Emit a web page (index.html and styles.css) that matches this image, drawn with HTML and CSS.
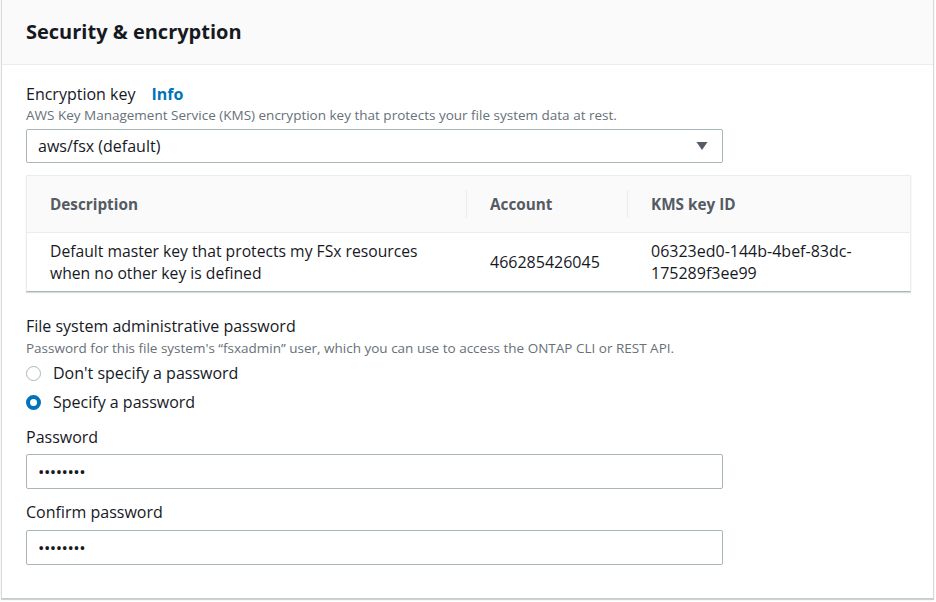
FILE: index.html
```html
<!DOCTYPE html>
<html lang="en">
<head>
<meta charset="utf-8">
<title>Security &amp; encryption</title>
<link rel="stylesheet" href="styles.css">
</head>
<body>
<section class="panel">
  <header class="panel-header">
    <h2 class="panel-title">Security &amp; encryption</h2>
  </header>
  <div class="panel-body">
    <div class="field">
      <div class="label-row">
        <span class="label">Encryption key</span>
        <a class="info">Info</a>
      </div>
      <div class="desc">AWS Key Management Service (KMS) encryption key that protects your file system data at rest.</div>
      <div class="select">
        <span>aws/fsx (default)</span>
        <svg class="caret" width="12" height="10" viewBox="0 0 12 10"><path d="M0.5 1 L11.5 1 L6 9 Z" fill="#545b64"/></svg>
      </div>
    </div>

    <div class="kms-table">
      <div class="thead">
        <div class="th c1">Description</div>
        <div class="th c2">Account</div>
        <div class="th c3">KMS key ID</div>
      </div>
      <div class="trow">
        <div class="td c1">Default master key that protects my FSx resources<br>when no other key is defined</div>
        <div class="td c2">466285426045</div>
        <div class="td c3">06323ed0-144b-4bef-83dc-<br>175289f3ee99</div>
      </div>
    </div>

    <div class="field pw-field">
      <div class="label">File system administrative password</div>
      <div class="desc">Password for this file system's “fsxadmin” user, which you can use to access the ONTAP CLI or REST API.</div>
      <div class="radios">
        <label class="radio"><span class="dot"></span><span>Don't specify a password</span></label>
        <label class="radio checked"><span class="dot"></span><span>Specify a password</span></label>
      </div>
    </div>

    <div class="field sub">
      <div class="label">Password</div>
      <div class="input">••••••••</div>
    </div>
    <div class="field sub2">
      <div class="label">Confirm password</div>
      <div class="input">••••••••</div>
    </div>
  </div>
</section>
</body>
</html>
```

FILE: styles.css
```css
* { box-sizing: border-box; }
html, body { margin: 0; padding: 0; background: #ffffff; }
body {
  font-family: "Open Sans", "Noto Sans", "Liberation Sans", sans-serif;
  color: #16191f;
  width: 936px;
  height: 602px;
  overflow: hidden;
}
.panel {
  margin: -1px 0 0 1px;
  width: 933px;
  border: 1px solid #d5dbdb;
  border-bottom-color: #c6cdcd;
  box-shadow: 0 1px 1px rgba(0,28,36,0.2);
  background: #fff;
}
.panel-header {
  height: 65px;
  background: #fafafa;
  border-bottom: 1px solid #eaeded;
  display: flex;
  align-items: center;
  padding: 0 24px 2px;
}
.panel-title {
  margin: 0;
  font-size: 20px;
  font-weight: 700;
  color: #16191f;
}
.panel-body {
  padding: 18px 24px 33px;
}
.label-row { display: flex; align-items: center; gap: 16px; }
.label {
  font-size: 16px;
  line-height: 22px;
  color: #16191f;
}
.info {
  font-size: 16px;
  font-weight: 700;
  color: #0073bb;
  line-height: 22px;
}
.desc {
  font-size: 13.5px;
  line-height: 16px;
  color: #687078;
  margin-top: 2px;
  white-space: nowrap;
}
.select {
  margin-top: 6px;
  width: 697px;
  height: 34px;
  border: 1px solid #aab7b8;
  border-radius: 2px;
  display: flex;
  align-items: center;
  justify-content: space-between;
  padding: 0 14px 0 11px;
  font-size: 16px;
}
.kms-table {
  margin-top: 12px;
  width: 885px;
  border: 1px solid #eaeded;
  border-bottom: 1px solid #aab7b8;
  box-shadow: 0 1px 1px rgba(0,28,36,0.15);
}
.thead, .trow { display: flex; }
.thead {
  height: 57px;
  background: #fafafa;
  border-bottom: 1px solid #eaeded;
  align-items: center;
}
.trow { height: 58px; align-items: center; }
.th {
  font-size: 15.3px;
  font-weight: 700;
  color: #545b64;
  height: 28px;
  display: flex;
  align-items: center;
}
.td {
  font-size: 16px;
  line-height: 22px;
  color: #16191f;
  white-space: nowrap;
}
.td.c1 { font-size: 15.7px; }
.c1 { width: 440px; padding-left: 23px; }
.c2 { width: 161px; padding-left: 23px; }
.c3 { flex: 1; padding-left: 23px; }
.th.c1, .th.c2 { border-right: 1px solid #eaeded; }
.pw-field { margin-top: 23px; }
.pw-field .desc { margin-top: 3px; }
.radios { margin-top: 6px; display: flex; flex-direction: column; gap: 7px; }
.radio {
  display: flex;
  align-items: center;
  gap: 12px;
  font-size: 16px;
  line-height: 22px;
}
.dot {
  width: 15px;
  height: 15px;
  border-radius: 50%;
  border: 1.5px solid #aab7b8;
  background: #fff;
}
.radio.checked .dot {
  border: 4.5px solid #0073bb;
}
.sub { margin-top: 13px; }
.sub2 { margin-top: 12px; }
.sub2 .input { margin-top: 7px; }
.input {
  margin-top: 6px;
  width: 697px;
  height: 35px;
  border: 1px solid #aab7b8;
  border-radius: 2px;
  display: flex;
  align-items: center;
  padding: 0 11px;
  font-size: 17px;
  letter-spacing: -0.5px;
  color: #16191f;
}
```
